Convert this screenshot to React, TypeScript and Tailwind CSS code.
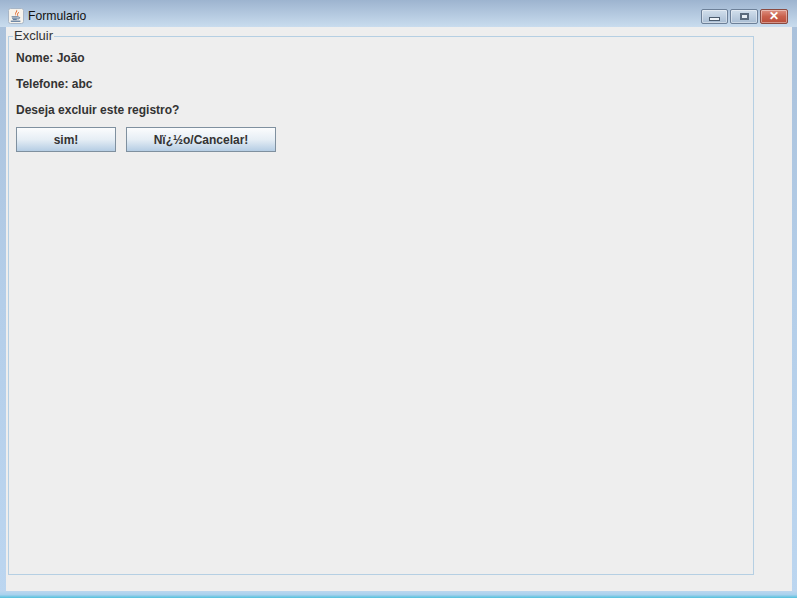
import React from 'react';

const JavaIcon = () => (
  <svg width="16" height="16" viewBox="0 0 16 16" className="shrink-0">
    <rect x="0.5" y="0.5" width="15" height="15" rx="2" fill="#f7f3ec" stroke="#a9b6c6" />
    <path d="M8.8 1.8 C10.6 4 6.4 5 8.2 8 C5.8 6.2 8 4 8.8 1.8 Z" fill="#e0692f" />
    <path d="M11 4.2 C9.6 5.2 9 6.2 9.8 7.8" fill="none" stroke="#e0692f" strokeWidth="1" />
    <path d="M3.6 8.8 H10 M4 10.2 H9.6 M4.8 11.6 H8.8" stroke="#44668f" strokeWidth="0.9" />
    <path d="M10 9 C12.4 8.6 12.4 11 9.4 11" fill="none" stroke="#44668f" strokeWidth="0.9" />
    <path d="M2.8 13.2 H12.4" stroke="#44668f" strokeWidth="1.1" />
  </svg>
);

const WinButton = ({ className, children }: { className: string; children: React.ReactNode }) => (
  <div className={`h-[15px] flex items-center justify-center rounded-[2px] border shadow-[inset_0_0_0_1px_rgba(255,255,255,0.4)] ${className}`}>
    {children}
  </div>
);

const SwingButton = ({ label, width }: { label: string; width: string }) => (
  <button className={`${width} h-[25px] border border-[#7f909f] bg-gradient-to-b from-[#fbfcfd] via-[#e6eef5] to-[#b5cde4] text-[12px] font-bold text-[#333333] text-center`}>
    {label}
  </button>
);

export default function App() {
  return (
    <div className="w-[797px] h-[598px] overflow-hidden flex flex-col bg-gradient-to-b from-[#a9c0da] via-[#b4cee9] to-[#bcd6f0] font-['Liberation_Sans',sans-serif]">
      {/* Title bar */}
      <div className="h-[27px] shrink-0 flex items-center pl-[8px] pr-[9px] pt-[5px] bg-gradient-to-b from-[#9db4cf] via-[#b3c8df] to-[#c9dcee]">
        <JavaIcon />
        <span className="ml-[4px] mt-[1px] text-[12.2px] text-[#111111]">Formulario</span>
        <div className="ml-auto flex gap-[2px]">
          <WinButton className="w-[27px] border-[#6d8098] bg-gradient-to-b from-[#d2dfec] to-[#a9bdd3]">
            <div className="w-[11px] h-[4px] mt-[5px] bg-[#eef3f8] border border-[#4b5b6d]" />
          </WinButton>
          <WinButton className="w-[28px] border-[#6d8098] bg-gradient-to-b from-[#d2dfec] to-[#a9bdd3]">
            <div className="w-[9px] h-[7px] border-2 border-[#5a6a7c] bg-[#e6edf4]" />
          </WinButton>
          <WinButton className="w-[28px] border-[#8a4a40] bg-gradient-to-b from-[#dd9182] via-[#c9604c] to-[#b84d3a]">
            <span className="text-[12px] leading-none font-bold text-white">✕</span>
          </WinButton>
        </div>
      </div>

      {/* Client area */}
      <div className="flex-1 ml-[6px] mr-[5px] bg-[#eeeeee] pl-[2px] pr-[38px] pt-[9px] pb-[16px]">
        <div className="relative h-full border border-[#b5cfe3] pl-[7px] pt-[14px]">
          <span className="absolute left-[4px] -top-[8px] bg-[#eeeeee] px-[1px] text-[13px] leading-[14px] text-[#333333]">Excluir</span>
          <div className="flex flex-col gap-[12px] text-[12px] leading-[14px] font-bold text-[#333333]">
            <p>Nome: João</p>
            <p>Telefone: abc</p>
            <p>Deseja excluir este registro?</p>
          </div>
          <div className="flex gap-[10px] mt-[10px]">
            <SwingButton label="sim!" width="w-[100px]" />
            <SwingButton label="Nï¿½o/Cancelar!" width="w-[150px]" />
          </div>
        </div>
      </div>

      {/* Bottom frame */}
      <div className="h-[7px] shrink-0 bg-gradient-to-b from-[#bcd6ee] via-[#a9d2ee] to-[#4fc0dc]" />
    </div>
  );
}
